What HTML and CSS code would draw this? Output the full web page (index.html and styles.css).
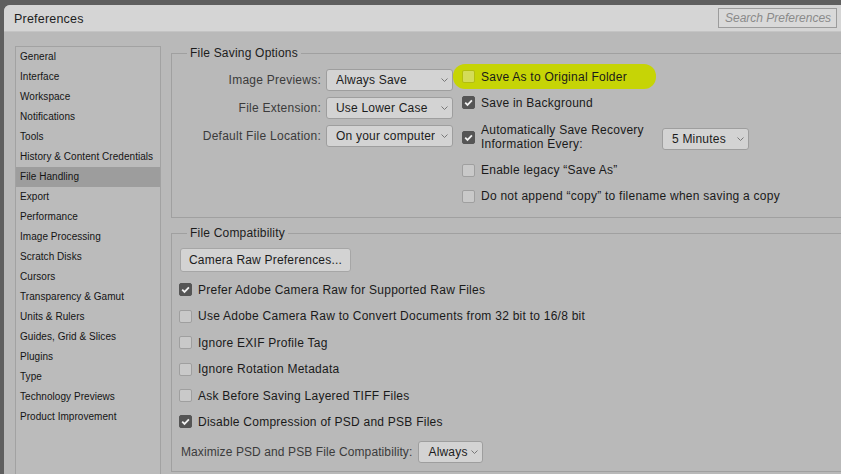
FILE: index.html
```html
<!DOCTYPE html>
<html lang="en">
<head>
<meta charset="utf-8">
<title>Preferences</title>
<link rel="stylesheet" href="styles.css">
</head>
<body>
<div class="frame">
  <div class="window">
    <div class="titlebar">
      <div class="title">Preferences</div>
      <div class="search">Search Preferences</div>
    </div>
    <div class="content">
      <ul class="sidebar">
        <li>General</li>
        <li>Interface</li>
        <li>Workspace</li>
        <li>Notifications</li>
        <li>Tools</li>
        <li>History &amp; Content Credentials</li>
        <li class="active">File Handling</li>
        <li>Export</li>
        <li>Performance</li>
        <li>Image Processing</li>
        <li>Scratch Disks</li>
        <li>Cursors</li>
        <li>Transparency &amp; Gamut</li>
        <li>Units &amp; Rulers</li>
        <li>Guides, Grid &amp; Slices</li>
        <li>Plugins</li>
        <li>Type</li>
        <li>Technology Previews</li>
        <li>Product Improvement</li>
      </ul>
      <div class="main">
        <fieldset class="group saving">
          <legend>File Saving Options</legend>
          <div class="saving-cols">
            <div class="fields">
              <div class="field">
                <span class="field-label">Image Previews:</span>
                <div class="select w127"><span>Always Save</span><svg class="chev" width="7" height="4" viewBox="0 0 7 4"><polyline points="0.5,0.5 3.5,3.5 6.5,0.5"/></svg></div>
              </div>
              <div class="field">
                <span class="field-label">File Extension:</span>
                <div class="select w127"><span>Use Lower Case</span><svg class="chev" width="7" height="4" viewBox="0 0 7 4"><polyline points="0.5,0.5 3.5,3.5 6.5,0.5"/></svg></div>
              </div>
              <div class="field">
                <span class="field-label">Default File Location:</span>
                <div class="select w127"><span>On your computer</span><svg class="chev" width="7" height="4" viewBox="0 0 7 4"><polyline points="0.5,0.5 3.5,3.5 6.5,0.5"/></svg></div>
              </div>
            </div>
            <div class="options">
              <div class="opt r1">
                <div class="pill">
                  <span class="cb cb-hl"></span>
                  <span class="lbl">Save As to Original Folder</span>
                </div>
              </div>
              <div class="opt r2">
                <span class="cb on"><svg width="13" height="13" viewBox="0 0 13 13"><path d="M3.2 6.6 L5.5 8.9 L9.9 4.3"/></svg></span>
                <span class="lbl">Save in Background</span>
              </div>
              <div class="opt r3">
                <span class="cb on"><svg width="13" height="13" viewBox="0 0 13 13"><path d="M3.2 6.6 L5.5 8.9 L9.9 4.3"/></svg></span>
                <span class="lbl two">Automatically Save Recovery<br>Information Every:</span>
                <div class="select w87 low"><span>5 Minutes</span><svg class="chev" width="7" height="4" viewBox="0 0 7 4"><polyline points="0.5,0.5 3.5,3.5 6.5,0.5"/></svg></div>
              </div>
              <div class="opt r4">
                <span class="cb"></span>
                <span class="lbl">Enable legacy “Save As”</span>
              </div>
              <div class="opt r5">
                <span class="cb"></span>
                <span class="lbl">Do not append “copy” to filename when saving a copy</span>
              </div>
            </div>
          </div>
        </fieldset>
        <fieldset class="group compat">
          <legend>File Compatibility</legend>
          <button class="btn" type="button">Camera Raw Preferences...</button>
          <div class="checks">
            <div class="chk">
              <span class="cb on"><svg width="13" height="13" viewBox="0 0 13 13"><path d="M3.2 6.6 L5.5 8.9 L9.9 4.3"/></svg></span>
              <span class="lbl">Prefer Adobe Camera Raw for Supported Raw Files</span>
            </div>
            <div class="chk">
              <span class="cb"></span>
              <span class="lbl">Use Adobe Camera Raw to Convert Documents from 32 bit to 16/8 bit</span>
            </div>
            <div class="chk">
              <span class="cb"></span>
              <span class="lbl">Ignore EXIF Profile Tag</span>
            </div>
            <div class="chk">
              <span class="cb"></span>
              <span class="lbl">Ignore Rotation Metadata</span>
            </div>
            <div class="chk">
              <span class="cb"></span>
              <span class="lbl">Ask Before Saving Layered TIFF Files</span>
            </div>
            <div class="chk">
              <span class="cb on"><svg width="13" height="13" viewBox="0 0 13 13"><path d="M3.2 6.6 L5.5 8.9 L9.9 4.3"/></svg></span>
              <span class="lbl">Disable Compression of PSD and PSB Files</span>
            </div>
          </div>
          <div class="maxrow">
            <span class="field-label plain">Maximize PSD and PSB File Compatibility:</span>
            <div class="select w65"><span>Always</span><svg class="chev" width="7" height="4" viewBox="0 0 7 4"><polyline points="0.5,0.5 3.5,3.5 6.5,0.5"/></svg></div>
          </div>
        </fieldset>
      </div>
    </div>
  </div>
</div>
</body>
</html>
```
FILE: styles.css
```css
html, body {
  margin: 0;
  padding: 0;
  width: 841px;
  height: 474px;
  overflow: hidden;
  font-family: "Liberation Sans", Arial, sans-serif;
  color: #1c1c1c;
}
.frame {
  width: 841px;
  height: 474px;
  background: #5f5f5f;
  padding: 5px 0 0 4px;
  box-sizing: border-box;
}
.window {
  height: 100%;
  background: #b9b9b9;
  border-radius: 6px 0 0 0;
  overflow: hidden;
}
.titlebar {
  height: 27px;
  background: #d5d5d5;
  display: flex;
  align-items: center;
  justify-content: space-between;
  padding: 0 4px 0 10px;
  border-bottom: 1px solid #c4c4c4;
  box-sizing: border-box;
}
.title {
  font-size: 12.5px;
  color: #1e1e1e;
  padding-top: 1px;
  letter-spacing: 0.2px;
}
.search {
  width: 119px;
  height: 20px;
  box-sizing: border-box;
  border: 1px solid #9c9c9c;
  background: #d9d9d9;
  font-size: 12px;
  font-style: italic;
  color: #8a8a8a;
  padding: 2px 0 0 6px;
  margin-top: 0;
}
.content {
  display: flex;
  padding: 14px 0 0 11px;
  align-items: flex-start;
}
.sidebar {
  list-style: none;
  margin: 0;
  padding: 0;
  width: 146px;
  height: 430px;
  box-sizing: border-box;
  border: 1px solid #a2a2a2;
  background: #bbbbbb;
  flex: none;
}
.sidebar li {
  height: 20px;
  line-height: 19px;
  font-size: 10px;
  padding-left: 4px;
  color: #141414;
  letter-spacing: 0.05px;
}
.sidebar li.active {
  background: #9d9d9d;
}
.main {
  margin-left: 10px;
  width: 720px;
  flex: none;
}
.group {
  margin: 0;
  padding: 0;
  border: 1px solid #a0a0a0;
  border-right: none;
  min-width: 0;
}
.group legend {
  font-size: 12px;
  line-height: 14px;
  padding: 0 3px;
  margin-left: 15px;
  color: #1c1c1c;
  letter-spacing: 0.2px;
}
.saving {
  padding-bottom: 7px;
}
.saving-cols {
  display: flex;
}
.fields {
  display: flex;
  flex-direction: column;
  gap: 6px;
  padding-top: 9px;
  width: 281px;
  flex: none;
}
.field {
  display: flex;
  align-items: center;
  gap: 5px;
  height: 22px;
}
.field-label {
  width: 149px;
  text-align: right;
  font-size: 12px;
  color: #3b3b3b;
  flex: none;
  letter-spacing: 0.25px;
}
.field-label.plain {
  width: auto;
  text-align: left;
  letter-spacing: 0.1px;
}
.select {
  height: 22px;
  box-sizing: border-box;
  border: 1px solid #9e9e9e;
  border-radius: 3px;
  background: #d3d3d3;
  display: flex;
  align-items: center;
  justify-content: space-between;
  padding: 0 4px 0 9px;
  font-size: 12px;
  color: #1c1c1c;
  flex: none;
  white-space: nowrap;
  overflow: hidden;
  letter-spacing: 0.2px;
}
.select.low {
  margin-top: 3px;
}
.select span {
  overflow: hidden;
}
.w127 { width: 127px; }
.w87 { width: 87px; }
.w65 { width: 65px; }
.chev {
  flex: none;
  margin-left: 2px;
}
.chev polyline {
  fill: none;
  stroke: #777777;
  stroke-width: 1;
}
.options {
  padding-top: 4px;
  display: flex;
  flex-direction: column;
}
.opt {
  display: flex;
  align-items: center;
  padding-left: 9px;
}
.r1 { height: 25px; padding-left: 0; }
.r2 { height: 27px; }
.r3 { height: 42px; }
.r4 { height: 24px; }
.r5 { height: 28px; }
.pill {
  display: flex;
  align-items: center;
  height: 25px;
  width: 203px;
  box-sizing: border-box;
  padding-left: 9px;
  background: #c6d406;
  border-radius: 12px;
}
.cb {
  width: 13px;
  height: 13px;
  box-sizing: border-box;
  border: 1px solid #9f9f9f;
  border-radius: 2px;
  background: #c9c9c9;
  flex: none;
  display: block;
}
.cb svg {
  display: block;
  margin: -1px;
}
.cb path {
  fill: none;
  stroke: #f2f2f2;
  stroke-width: 1.8;
}
.cb.on {
  background: #555555;
  border-color: #555555;
}
.cb.cb-hl {
  background: #d4dc58;
  border-color: #b3be10;
}
.lbl {
  font-size: 12px;
  margin-left: 6px;
  white-space: nowrap;
  color: #1a1a1a;
  letter-spacing: 0.25px;
}
.lbl.two {
  width: 181px;
  line-height: 14px;
}
.compat {
  margin-top: 8px;
  padding: 0 0 4px 0;
}
.btn {
  margin: 8px 0 0 8px;
  height: 24px;
  width: 171px;
  box-sizing: border-box;
  border: 1px solid #a6a6a6;
  border-radius: 3px;
  background: #d3d3d3;
  font-family: "Liberation Sans", Arial, sans-serif;
  font-size: 12px;
  letter-spacing: 0.2px;
  color: #1c1c1c;
  padding: 0;
  display: block;
}
.checks {
  padding-top: 4.8px;
}
.chk {
  display: flex;
  align-items: center;
  height: 26.4px;
  padding-left: 7px;
}
.maxrow {
  display: flex;
  align-items: center;
  height: 30px;
  padding-left: 9px;
  margin-top: 2px;
  gap: 6px;
}
```
